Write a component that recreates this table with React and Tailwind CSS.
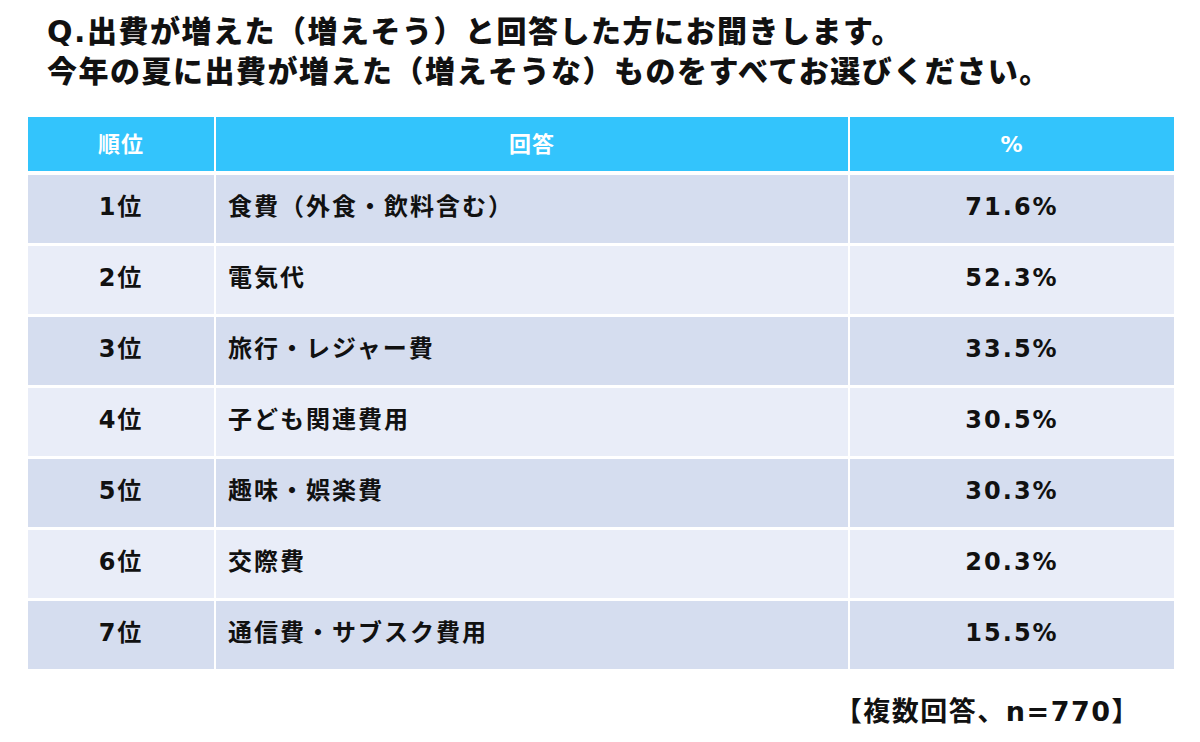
import React from "react";

const rows = [
  ["1位", "食費（外食・飲料含む）", "71.6%"],
  ["2位", "電気代", "52.3%"],
  ["3位", "旅行・レジャー費", "33.5%"],
  ["4位", "子ども関連費用", "30.5%"],
  ["5位", "趣味・娯楽費", "30.3%"],
  ["6位", "交際費", "20.3%"],
  ["7位", "通信費・サブスク費用", "15.5%"],
];

const font = { fontFamily: '"DejaVu Sans", "Noto Sans CJK JP", sans-serif' };

export default function App() {
  return (
    <div
      className="w-[1200px] h-[742px] bg-white text-[#111] font-bold overflow-hidden"
      style={font}
    >
      <div className="pt-[12px] pl-[47px] text-[30px] leading-[40px] tracking-[1.5px] font-black">
        <div>Q.出費が増えた（増えそう）と回答した方にお聞きします。</div>
        <div>今年の夏に出費が増えた（増えそうな）ものをすべてお選びください。</div>
      </div>

      <div className="mt-[25px] ml-[28px] w-[1146px] flex flex-col">
        <div className="grid grid-cols-[186px_632px_324px] gap-x-[2px] h-[54px] text-white text-[22px] tracking-[1px]">
          <div className="bg-[#33c4fc] flex items-center justify-center">順位</div>
          <div className="bg-[#33c4fc] flex items-center justify-center">回答</div>
          <div className="bg-[#33c4fc] flex items-center justify-center">%</div>
        </div>
        <div className="mt-[4px] flex flex-col gap-y-[3px]">
          {rows.map((r, i) => {
            const bg = i % 2 === 0 ? "bg-[#d5ddef]" : "bg-[#e9edf8]";
            return (
              <div
                key={i}
                className="grid grid-cols-[186px_632px_324px] gap-x-[2px] h-[68px] text-[24px] tracking-[2px]"
              >
                <div className={`${bg} flex items-center justify-center pb-[4px]`}>{r[0]}</div>
                <div className={`${bg} flex items-center pl-[12px] pb-[4px]`}>{r[1]}</div>
                <div className={`${bg} flex items-center justify-center pb-[4px]`}>{r[2]}</div>
              </div>
            );
          })}
        </div>
      </div>

      <div className="mt-[27px] pr-[60px] flex justify-end text-[27px] leading-[32px] tracking-[1.5px]">
        【複数回答、n=770】
      </div>
    </div>
  );
}
